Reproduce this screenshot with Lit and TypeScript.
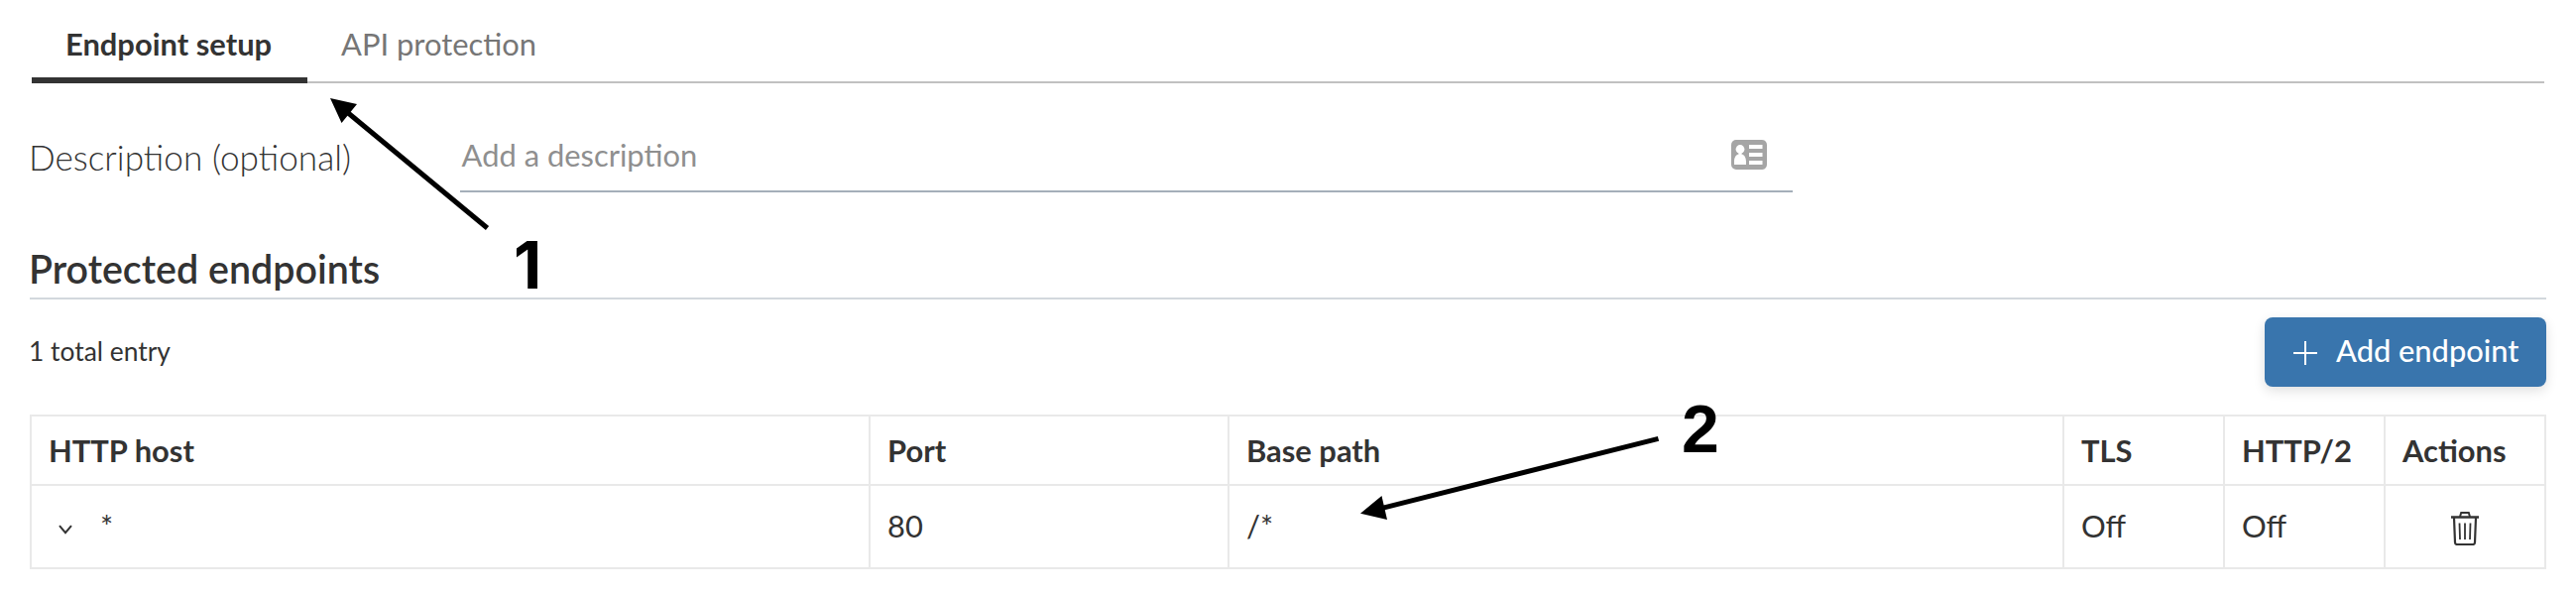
import { LitElement, html, css } from "lit";
import { customElement } from "lit/decorators.js";

@customElement("app-root")
export class AppRoot extends LitElement {
  static styles = css`
    :host {
      display: block;
      position: relative;
      box-sizing: border-box;
      width: 2598px;
      height: 602px;
      padding: 0 30px;
      background: #fff;
      color: #333;
      font-family: Lato, Carlito, sans-serif;
      font-size: 30.9px;
      overflow: hidden;
    }
    * { box-sizing: border-box; }
    .tabs {
      display: flex;
      height: 84px;
      margin: 0 2px;
      box-shadow: inset 0 -2px #c1c1c1;
    }
    .tab {
      height: 84px;
      padding: 24.6px 34px 0;
      line-height: 40px;
      color: #767676;
      white-space: nowrap;
    }
    .tab.active {
      width: 278px;
      font-weight: 700;
      color: #333;
      border-bottom: 6px solid #333;
    }
    .field { display: flex; height: 110px; }
    .label {
      width: 435px;
      margin-left: -1px;
      padding-top: 53.6px;
      font-size: 35.2px;
      line-height: 40px;
      font-weight: 300;
    }
    .input {
      display: flex;
      justify-content: space-between;
      width: 1344px;
      padding: 52.6px 26px 0 1.6px;
      line-height: 40px;
      color: #8f8f8f;
      border-bottom: 2px solid #a5afb9;
    }
    .card { width: 36px; height: 30px; margin-top: 4.4px; }
    .heading {
      margin: 0;
      height: 108px;
      padding-top: 46.5px;
      font-size: 39.4px;
      line-height: 60px;
      font-weight: 600;
      text-indent: -1px;
      border-bottom: 2px solid #d3d8dd;
    }
    .bar {
      display: flex;
      justify-content: space-between;
      height: 116px;
      padding-top: 18px;
    }
    .count { margin-left: -1px; font-size: 26.4px; line-height: 68px; }
    .add {
      display: flex;
      align-items: center;
      gap: 19px;
      width: 284px;
      height: 70px;
      padding: 0 0 2px 29px;
      border: 0;
      border-radius: 8px;
      background: #3975ad;
      color: #fff;
      font: 500 30.8px/68px Lato, Carlito, sans-serif;
      white-space: nowrap;
      box-shadow: 0 4px 12px rgba(0, 0, 0, 0.13);
    }
    .plus { margin-top: 4px; }
    .grid {
      display: grid;
      grid-template-columns: 846px 362px 842px 162px 162px 162px;
      grid-template-rows: 70px 84px;
      width: 2538px;
      border: solid #e9e9e9;
      border-width: 2px 0 0 2px;
    }
    .cell {
      display: flex;
      align-items: center;
      padding: 0 0 2px 17px;
      border: solid #e9e9e9;
      border-width: 0 2px 2px 0;
      white-space: nowrap;
    }
    .head { padding-bottom: 0; font-weight: 700; }
    .center { justify-content: center; padding: 4px 0 0; }
    .chev { margin: 8px 28.5px 0 9.5px; }
    .arrows { position: absolute; left: 0; top: 0; }
    .mark {
      position: absolute;
      font: 700 68px/66px "Liberation Sans", Arial, sans-serif;
      color: #000;
    }
    .one { left: 518px; top: 234px; font: 700 65.6px/66px Inter, sans-serif; }
    .two { left: 1696px; top: 399px; }
  `;

  render() {
    return html`
      <nav class="tabs">
        <div class="tab active"><span>Endpoint setup</span></div>
        <div class="tab"><span>API protection</span></div>
      </nav>
      <div class="field">
        <div class="label"><span>Description (optional)</span></div>
        <div class="input">
          <span>Add a description</span>
          <svg class="card" viewBox="0 0 36 30">
            <rect width="36" height="30" rx="5" fill="#a5a5a5" />
            <g fill="#fff">
              <circle cx="9" cy="9.500" r="4.400" />
              <path d="M3 25v-3c0-4 1.800-7 4.500-7.400V12h3v2.600C13.200 15 15 18 15 22v3z" />
              <path d="M18 5h13.500v4H18zM18 13h13.500v4H18zM18 21h13.500v4H18z" />
            </g>
          </svg>
        </div>
      </div>
      <h2 class="heading"><span>Protected endpoints</span></h2>
      <div class="bar">
        <span class="count">1 total entry</span>
        <button class="add">
          <svg class="plus" width="24" height="24" viewBox="0 0 24 24">
            <path d="M12 0v24M0 12h24" stroke="#fff" stroke-width="2" />
          </svg>
          <span>Add endpoint</span>
        </button>
      </div>
      <div class="grid">
        ${["HTTP host", "Port", "Base path", "TLS", "HTTP/2", "Actions"].map(
          (t) => html`<div class="cell head"><span>${t}</span></div>`
        )}
        <div class="cell">
          <svg class="chev" width="14" height="10" viewBox="0 0 14 10">
            <path d="M1 1.200l6 7 6-7" fill="none" stroke="#333" stroke-width="2" />
          </svg>
          <span>*</span>
        </div>
        ${["80", "/*", "Off", "Off"].map((t) => html`<div class="cell"><span>${t}</span></div>`)}
        <div class="cell center">
          <svg width="28" height="34" viewBox="0 0 28 34" fill="none" stroke="#333">
            <path d="M0 5.500h28" stroke-width="2.500" />
            <path d="M9 5l1.200-4h7.600L19 5" stroke-width="2" />
            <path d="M3 6l1 25q.1 2 2 2h16q1.900 0 2-2l1-25" stroke-width="2.200" />
            <path d="M8.500 11.500l.5 16.500M14 11.500V28M19.500 11.500L19 28" stroke-width="1.800" />
          </svg>
        </div>
      </div>
      <svg class="arrows" width="2598" height="602" viewBox="0 0 2598 602">
        <g stroke="#000" stroke-width="5">
          <path d="M491.500 230L350 113" />
          <path d="M1672.500 442.300L1394 512.300" />
        </g>
        <path d="M333 99l27 6-15.500 19zM1372 517.700l21.500-17.700 5.500 24z" />
      </svg>
      <span class="mark one">1</span>
      <span class="mark two">2</span>
    `;
  }
}
